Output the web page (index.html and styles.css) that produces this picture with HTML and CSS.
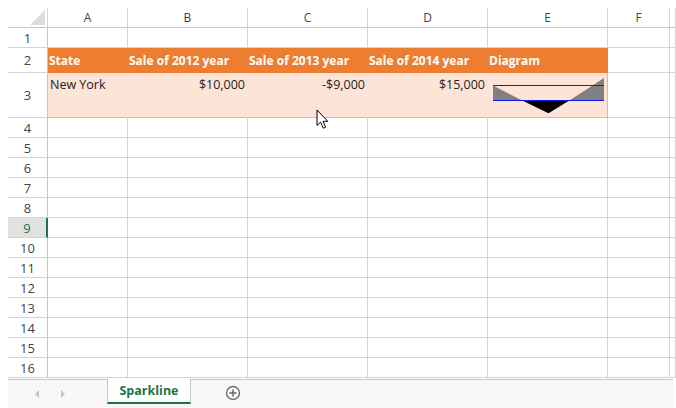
FILE: index.html
```html
<!DOCTYPE html>
<html>
<head>
<meta charset="utf-8">
<link rel="stylesheet" href="styles.css">
</head>
<body>
<div class="sheet">
  <div class="grid">
    <div class="ch corner"><span class="tri"></span></div>
    <div class="ch">A</div><div class="ch">B</div><div class="ch">C</div><div class="ch">D</div><div class="ch">E</div><div class="ch">F</div><div class="ch"></div>

    <div class="rh">1</div><div class="c"></div><div class="c"></div><div class="c"></div><div class="c"></div><div class="c"></div><div class="c"></div><div class="c"></div>

    <div class="rh">2</div>
    <div class="c hd">State</div><div class="c hd">Sale of 2012 year</div><div class="c hd">Sale of 2013 year</div><div class="c hd">Sale of 2014 year</div><div class="c hd hd-last">Diagram</div>
    <div class="c"></div><div class="c"></div>

    <div class="rh">3</div>
    <div class="c dt">New York</div><div class="c dt num">$10,000</div><div class="c dt num">-$9,000</div><div class="c dt num">$15,000</div>
    <div class="c dt dt-last">
      <svg class="spark" width="119" height="44" viewBox="0 0 119 44">
        <polygon points="5,27.5 5,12.5 34.2,27.5" fill="#808080"/>
        <polygon points="34.2,27.5 60.5,40.2 81.3,27.5" fill="#000"/>
        <polygon points="81.3,27.5 116,5 116,27.5" fill="#808080"/>
        <rect x="5" y="12" width="111" height="1" fill="#1616f0"/>
        <rect x="5" y="27" width="111" height="1" fill="#1616f0"/>
      </svg>
    </div>
    <div class="c"></div><div class="c"></div>

    <div class="rh">4</div><div class="c"></div><div class="c"></div><div class="c"></div><div class="c"></div><div class="c"></div><div class="c"></div><div class="c"></div>
    <div class="rh">5</div><div class="c"></div><div class="c"></div><div class="c"></div><div class="c"></div><div class="c"></div><div class="c"></div><div class="c"></div>
    <div class="rh">6</div><div class="c"></div><div class="c"></div><div class="c"></div><div class="c"></div><div class="c"></div><div class="c"></div><div class="c"></div>
    <div class="rh">7</div><div class="c"></div><div class="c"></div><div class="c"></div><div class="c"></div><div class="c"></div><div class="c"></div><div class="c"></div>
    <div class="rh">8</div><div class="c"></div><div class="c"></div><div class="c"></div><div class="c"></div><div class="c"></div><div class="c"></div><div class="c"></div>
    <div class="rh rh-active">9</div><div class="c"></div><div class="c"></div><div class="c"></div><div class="c"></div><div class="c"></div><div class="c"></div><div class="c"></div>
    <div class="rh">10</div><div class="c"></div><div class="c"></div><div class="c"></div><div class="c"></div><div class="c"></div><div class="c"></div><div class="c"></div>
    <div class="rh">11</div><div class="c"></div><div class="c"></div><div class="c"></div><div class="c"></div><div class="c"></div><div class="c"></div><div class="c"></div>
    <div class="rh">12</div><div class="c"></div><div class="c"></div><div class="c"></div><div class="c"></div><div class="c"></div><div class="c"></div><div class="c"></div>
    <div class="rh">13</div><div class="c"></div><div class="c"></div><div class="c"></div><div class="c"></div><div class="c"></div><div class="c"></div><div class="c"></div>
    <div class="rh">14</div><div class="c"></div><div class="c"></div><div class="c"></div><div class="c"></div><div class="c"></div><div class="c"></div><div class="c"></div>
    <div class="rh">15</div><div class="c"></div><div class="c"></div><div class="c"></div><div class="c"></div><div class="c"></div><div class="c"></div><div class="c"></div>
    <div class="rh">16</div><div class="c"></div><div class="c"></div><div class="c"></div><div class="c"></div><div class="c"></div><div class="c"></div><div class="c"></div>
  </div>
  <div class="tabbar">
    <div class="navs">
      <span class="nav nav-l"></span>
      <span class="nav nav-r"></span>
    </div>
    <div class="tab">Sparkline</div>
    <div class="add">
      <svg width="16" height="16" viewBox="0 0 16 16">
        <circle cx="8" cy="8" r="6.5" fill="none" stroke="#6d6d6d" stroke-width="1.4"/>
        <line x1="8" y1="4.5" x2="8" y2="11.5" stroke="#6d6d6d" stroke-width="1.6"/>
        <line x1="4.5" y1="8" x2="11.5" y2="8" stroke="#6d6d6d" stroke-width="1.6"/>
      </svg>
    </div>
  </div>
  <svg class="cursor" width="14" height="22" viewBox="0 0 14 22">
    <path d="M1 1 L1 16.5 L4.6 13.2 L7.2 19.2 L9.6 18.2 L7 12.3 L11.8 12.3 Z" fill="#fff" stroke="#000" stroke-width="1" stroke-linejoin="round"/>
  </svg>
</div>
</body>
</html>
```
FILE: styles.css
```css
html, body {
  margin: 0;
  padding: 0;
  background: #fff;
}
body {
  padding: 8px 0 0 8px;
  font-family: "Open Sans", "Noto Sans", sans-serif;
  overflow: hidden;
}
.sheet {
  position: relative;
  width: 668px;
}
.grid {
  display: grid;
  grid-template-columns: 40px 80px 120px 120px 120px 120px 62px 6px;
  grid-template-rows: 20px 20px 25px 45px repeat(13, 20px);
}
.grid > div {
  box-sizing: border-box;
  border-right: 1px solid #d4d4d4;
  border-bottom: 1px solid #d4d4d4;
  overflow: hidden;
  white-space: nowrap;
}
.ch {
  display: flex;
  align-items: center;
  justify-content: center;
  font-size: 12px;
  color: #444;
  border-bottom-color: #c6c6c6 !important;
}
.corner {
  position: relative;
}
.tri {
  position: absolute;
  right: 2px;
  bottom: 2px;
  width: 0;
  height: 0;
  border-left: 15px solid transparent;
  border-bottom: 15px solid #dcdcdc;
}
.rh {
  display: flex;
  align-items: center;
  justify-content: center;
  font-size: 13px;
  color: #444;
  border-right-color: #c6c6c6 !important;
}
.rh-active {
  background: #e1e1e1;
  color: #217346;
  border-right: 2px solid #217346 !important;
}
.hd {
  background: #ed7d31;
  color: #fff;
  font-weight: bold;
  font-size: 12px;
  display: flex;
  align-items: center;
  padding-left: 1px;
  border-right-color: #ed7d31 !important;
  border-bottom-color: #ed7d31 !important;
}
.dt {
  background: #fce4d6;
  color: #222;
  font-size: 12.5px;
  padding: 4px 2px 0 2px;
  line-height: 16px;
  border-right-color: #fce4d6 !important;
  border-bottom-color: #f4b084 !important;
}
.dt-last {
  border-right-color: #f4b084 !important;
  padding: 0;
}
.num {
  text-align: right;
}
.spark {
  display: block;
}
.tabbar {
  display: flex;
  align-items: stretch;
  height: 29px;
  width: 665px;
  margin-top: 1px;
  background: #f8f8fa;
  border-top: 1px solid #c6c6c6;
  box-sizing: border-box;
}
.navs {
  width: 99px;
  display: flex;
  align-items: center;
  gap: 22px;
  padding-left: 27px;
  box-sizing: border-box;
}
.nav {
  width: 0;
  height: 0;
  border-top: 4px solid transparent;
  border-bottom: 4px solid transparent;
}
.nav-l {
  border-right: 4px solid #c4c4c4;
}
.nav-r {
  border-left: 4px solid #c4c4c4;
}
.tab {
  width: 84px;
  margin-top: -1px;
  height: 25px;
  box-sizing: border-box;
  background: #fff;
  border-left: 1px solid #c6c6c6;
  border-right: 1px solid #c6c6c6;
  border-bottom: 2px solid #217346;
  color: #217346;
  font-weight: bold;
  font-size: 12.5px;
  display: flex;
  align-items: center;
  justify-content: center;
}
.add {
  width: 84px;
  display: flex;
  align-items: center;
  justify-content: center;
  padding-bottom: 2px;
}
.cursor {
  position: absolute;
  left: 308px;
  top: 101px;
}
```
